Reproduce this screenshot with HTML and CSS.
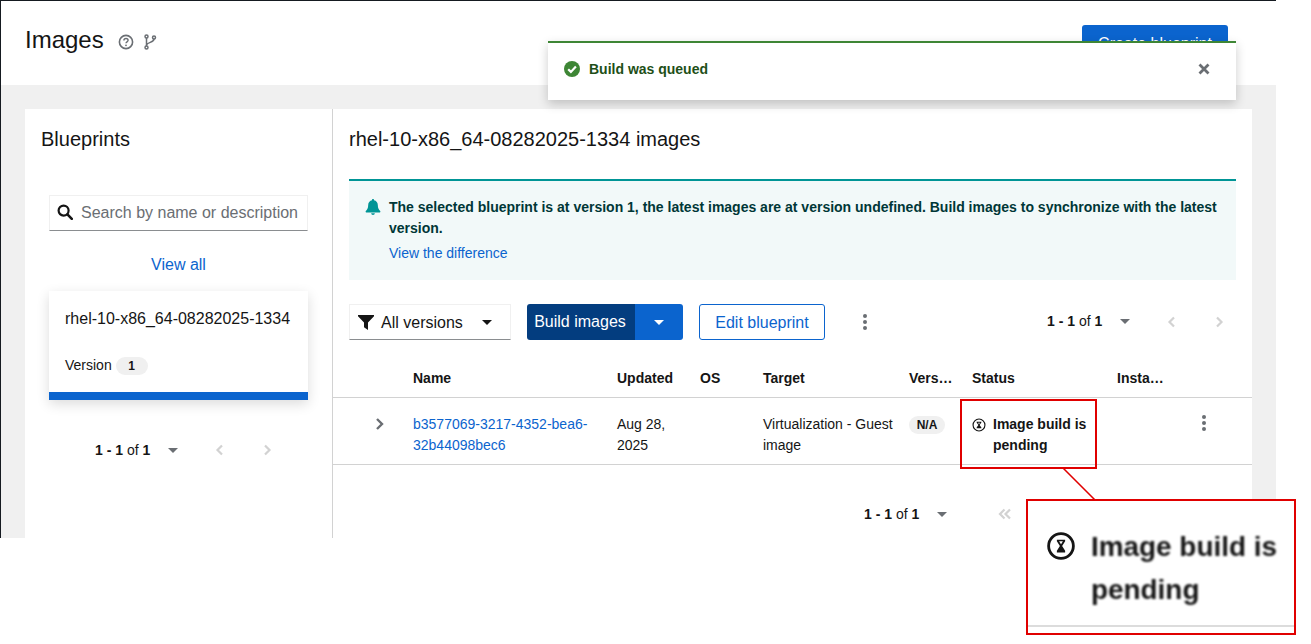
FILE: index.html
```html
<!DOCTYPE html>
<html lang="en">
<head>
  <meta charset="UTF-8" />
  <meta name="viewport" content="width=device-width, initial-scale=1.0"/>
  <title>Images</title>
  <link rel="stylesheet" href="styles.css">
</head>
<body>
  <div class="page">
    <div class="frame">
      <header class="page-head">
        <h1>Images</h1>
        <svg class="head-icon help" viewBox="0 0 16 16"><circle cx="8" cy="8" r="6.6" fill="none" stroke="#6a6e73" stroke-width="1.6"/><path d="M5.9 6.4c0-1.2 1-1.9 2.1-1.9s2.1.7 2.1 1.8c0 1.6-2.1 1.5-2.1 3" fill="none" stroke="#6a6e73" stroke-width="1.4"/><circle cx="8" cy="11.3" r=".9" fill="#6a6e73"/></svg>
        <svg class="head-icon branch" viewBox="0 0 12 16"><g fill="none" stroke="#6a6e73" stroke-width="1.5"><circle cx="2.5" cy="2.5" r="1.5"/><circle cx="2.5" cy="13.5" r="1.5"/><circle cx="10" cy="3.5" r="1.5"/><path d="M2.5 4v8M10 5c0 3.5-6.5 3-7.5 6"/></g></svg>
        <button class="btn-primary create">Create blueprint</button>
      </header>

      <div class="page-body">
        <div class="panel">
          <aside class="sidebar">
            <h2>Blueprints</h2>
            <div class="search">
              <svg class="search-icon" viewBox="0 0 16 16"><circle cx="6.6" cy="6.6" r="5" fill="none" stroke="#151515" stroke-width="2.2"/><path d="M10.4 10.4l4.4 4.4" stroke="#151515" stroke-width="2.6" stroke-linecap="round"/></svg>
              <span>Search by name or description</span>
            </div>
            <a class="view-all" href="#">View all</a>
            <div class="bp-card">
              <div class="bp-name">rhel-10-x86_64-08282025-1334</div>
              <div class="bp-version">Version <span class="badge">1</span></div>
            </div>
            <div class="pager side-pager">
              <span class="pager-count"><b>1 - 1</b> of <b>1</b></span>
              <span class="caret grey"></span>
              <svg class="pager-btn" viewBox="0 0 16 14"><path d="M10 2.500L5.500 7l4.500 4.500"/></svg>
              <svg class="pager-btn" viewBox="0 0 16 14"><path d="M6 2.500L10.500 7 6 11.500"/></svg>
            </div>
          </aside>

          <main class="main">
            <h2>rhel-10-x86_64-08282025-1334 images</h2>
            <div class="alert">
              <svg class="bell" viewBox="0 0 16 16"><path fill="#009596" d="M8 0c-.7 0-1.100.5-1 1.200C4.700 1.700 3.200 3.500 3.200 6c0 3.500-1.300 4.700-2.200 5.700-.3.300-.4.500-.4.800 0 .6.400 1 1 1h12.800c.6 0 1-.4 1-1 0-.3-.1-.5-.4-.8-.9-1-2.200-2.200-2.200-5.700 0-2.500-1.500-4.300-3.800-4.800C9.100.5 8.700 0 8 0zM6.200 14.300c0 1 .8 1.700 1.800 1.700s1.800-.7 1.800-1.700z"/></svg>
              <div>
                <p class="alert-title">The selected blueprint is at version 1, the latest images are at version undefined. Build images to synchronize with the latest version.</p>
                <a href="#">View the difference</a>
              </div>
            </div>

            <div class="toolbar">
              <div class="filter">
                <svg class="filter-icon" viewBox="0 0 16 16"><path fill="#151515" d="M0 1h16v1.200L10 8.600V16l-4-2.800V8.600L0 2.200z"/></svg>
                <span>All versions</span>
                <span class="caret dark"></span>
              </div>
              <div class="split">
                <span class="split-main">Build images</span>
                <span class="split-toggle"><span class="caret light"></span></span>
              </div>
              <button class="btn-secondary">Edit blueprint</button>
              <span class="kebab toolbar-kebab"><i></i><i></i><i></i></span>
              <div class="pager top-pager">
                <span class="pager-count"><b>1 - 1</b> of <b>1</b></span>
                <span class="caret grey"></span>
                <svg class="pager-btn" viewBox="0 0 16 14"><path d="M10 2.500L5.500 7l4.500 4.500"/></svg>
                <svg class="pager-btn" viewBox="0 0 16 14"><path d="M6 2.500L10.500 7 6 11.500"/></svg>
              </div>
            </div>

            <table class="images">
              <colgroup>
                <col class="c-expand"><col class="c-name"><col class="c-updated"><col class="c-os"><col class="c-target"><col class="c-version"><col class="c-status"><col class="c-instance"><col class="c-actions">
              </colgroup>
              <thead>
                <tr>
                  <th></th><th>Name</th><th>Updated</th><th>OS</th><th>Target</th><th>Vers…</th><th>Status</th><th>Insta…</th><th></th>
                </tr>
              </thead>
              <tbody>
                <tr>
                  <td class="expand"><svg viewBox="0 0 10 14"><path d="M2 2l5 5-5 5" fill="none" stroke="#6a6e73" stroke-width="2.400"/></svg></td>
                  <td><a href="#">b3577069-3217-4352-bea6-32b44098bec6</a></td>
                  <td>Aug 28, 2025</td>
                  <td></td>
                  <td>Virtualization - Guest image</td>
                  <td><span class="badge na">N/A</span></td>
                  <td>
                    <div class="status">
                      <svg viewBox="0 0 16 16"><circle cx="8" cy="8" r="6.800" fill="none" stroke="#151515" stroke-width="1.300"/><path fill="#151515" d="M5.300 4.200h5.400v1L8.700 8l2 2.800v1H5.300v-1l2-2.800-2-2.800z"/><path fill="#fff" d="M6.800 5.300h2.400L8 7z"/></svg>
                      <span>Image build is pending</span>
                    </div>
                  </td>
                  <td></td>
                  <td class="actions"><span class="kebab"><i></i><i></i><i></i></span></td>
                </tr>
              </tbody>
            </table>

            <div class="pager bottom-pager">
              <span class="pager-count"><b>1 - 1</b> of <b>1</b></span>
              <span class="caret grey"></span>
              <svg class="pager-btn" viewBox="0 0 16 14"><path d="M7.500 2.500L3 7l4.500 4.500M13 2.500L8.500 7l4.500 4.500"/></svg>
              <svg class="pager-btn" viewBox="0 0 16 14"><path d="M10 2.500L5.500 7l4.500 4.500"/></svg>
              <svg class="pager-btn" viewBox="0 0 16 14"><path d="M6 2.500L10.500 7 6 11.500"/></svg>
              <svg class="pager-btn" viewBox="0 0 16 14"><path d="M3 2.500L7.500 7 3 11.500M8.500 2.500L13 7l-4.500 4.500"/></svg>
            </div>
          </main>
        </div>
      </div>
    </div>

    <div class="toast">
      <svg class="toast-icon" viewBox="0 0 16 16"><circle cx="8" cy="8" r="8" fill="#3e8635"/><path d="M4.200 8.200l2.700 2.700 5-5.300" fill="none" stroke="#fff" stroke-width="2.200"/></svg>
      <span class="toast-text">Build was queued</span>
      <svg class="toast-close" viewBox="0 0 12 12"><path d="M1.500 1.500l9 9M10.500 1.500l-9 9" stroke="#6a6e73" stroke-width="2.800"/></svg>
    </div>

    <div class="mark"></div>
    <svg class="mark-line" viewBox="0 0 34 34"><path d="M1 1l32 32" stroke="#e00000" stroke-width="1.600"/></svg>
    <div class="callout">
      <svg viewBox="0 0 16 16"><circle cx="8" cy="8" r="6.600" fill="none" stroke="#151515" stroke-width="1.500"/><path fill="#151515" d="M5.800 4.600h4.400v.9L8.600 8l1.600 2.500v.9H5.800v-.9L7.400 8 5.800 5.500z"/><path fill="#fff" d="M7 5.500h2L8 7z"/></svg>
      <span>Image build is pending</span>
    </div>
  </div>
</body>
</html>
```

FILE: styles.css
```css
* { box-sizing: border-box; }
body {
  margin: 0;
  background: #fff;
  color: #151515;
  font-family: 'Liberation Sans', Arial, sans-serif;
  font-size: 14px;
  line-height: 21px;
}
a { color: #0b64ce; text-decoration: none; }
h1, h2, p { margin: 0; font-weight: 400; }

.page { position: relative; width: 1311px; height: 644px; overflow: hidden; }
.frame {
  width: 1276px;
  height: 538px;
  overflow: hidden;
  border-top: 1px solid #151a20;
  border-left: 1px solid #151a20;
}

/* header */
.page-head {
  display: flex;
  align-items: flex-start;
  height: 84px;
  padding: 24px 48px 0 24px;
  background: #fff;
}
.page-head h1 { font-size: 24px; line-height: 30px; }
.head-icon { height: 16px; margin-top: 9px; }
.help { width: 16px; margin-left: 14px; }
.branch { width: 14px; margin-left: 9px; }
.btn-primary {
  margin-left: auto;
  width: 146px;
  height: 36px;
  border: 0;
  border-radius: 3px;
  background: #0b64ce;
  color: #fff;
  font: inherit;
  font-size: 16px;
}

/* body */
.page-body { height: 453px; padding: 24px 24px 0 24px; background: #f0f0f0; }
.panel { display: flex; height: 100%; background: #fff; }

.sidebar { width: 308px; flex: none; padding: 0 24px; border-right: 1px solid #d2d2d2; }
.sidebar h2 { margin: 15px 0 0 -8px; font-size: 20px; line-height: 30px; }
.search {
  display: flex;
  align-items: center;
  gap: 8px;
  height: 36px;
  margin-top: 41px;
  padding: 0 0 2px 7px;
  border: 1px solid #f0f0f0;
  border-bottom-color: #8a8d90;
  color: #6a6e73;
  font-size: 16px;
  white-space: nowrap;
}
.search-icon { width: 16px; height: 16px; flex: none; }
.view-all { display: block; margin-top: 23px; text-align: center; font-size: 16px; }
.bp-card {
  height: 109px;
  margin-top: 16px;
  padding: 16px 16px 0;
  border-bottom: 8px solid #0b64ce;
  background: #fff;
  box-shadow: 0 4px 12px rgba(3, 3, 3, 0.14);
}
.bp-name { font-size: 16px; line-height: 24px; white-space: nowrap; }
.bp-version { display: flex; align-items: center; gap: 4px; margin-top: 24px; }

.badge {
  display: inline-block;
  min-width: 32px;
  height: 18px;
  padding: 0 8px;
  border-radius: 30px;
  background: #f0f0f0;
  font-size: 12px;
  font-weight: 700;
  line-height: 18px;
  text-align: center;
}
.badge.na { width: 36px; padding: 0; }

/* pagination */
.pager { display: flex; align-items: center; height: 36px; }
.pager-count { width: 54px; font-size: 14px; white-space: nowrap; }
.pager .caret { margin-left: 19px; }
.pager-btn {
  width: 16px;
  height: 14px;
  flex: none;
  margin-left: 31px;
  fill: none;
  stroke: #d2d2d2;
  stroke-width: 2.200;
}
.pager .caret + .pager-btn { margin-left: 34px; }
.side-pager { margin-top: 32px; padding-left: 46px; }
.top-pager { margin-left: auto; padding: 0 25px 1px 0; }
.bottom-pager { justify-content: flex-end; margin-top: 31px; padding-right: 98px; }
.bottom-pager .caret + .pager-btn { margin-left: 50px; }

.caret {
  display: inline-block;
  width: 0;
  height: 0;
  border-top: 5px solid #6a6e73;
  border-left: 5px solid transparent;
  border-right: 5px solid transparent;
}
.caret.dark { border-top-color: #151515; }
.caret.light { border-top-color: #fff; }

/* main column */
.main { flex: 1; min-width: 0; }
.main > h2 { margin: 15px 0 0 16px; font-size: 20px; line-height: 30px; white-space: nowrap; }
.alert {
  display: flex;
  gap: 8px;
  height: 101px;
  margin: 25px 16px 0;
  padding: 16px 16px 0 16px;
  border-top: 2px solid #009596;
  background: #f2f9f9;
}
.bell { width: 16px; height: 16px; flex: none; margin-top: 2px; }
.alert-title { margin-bottom: 4px; color: #003737; font-weight: 700; }

.toolbar { display: flex; align-items: center; height: 36px; margin-top: 24px; padding-left: 16px; }
.filter {
  display: flex;
  align-items: center;
  width: 162px;
  height: 36px;
  padding-left: 8px;
  border: 1px solid #f0f0f0;
  border-bottom-color: #8a8d90;
  font-size: 16px;
}
.filter-icon { width: 16px; height: 16px; margin-right: 7px; }
.filter .caret { margin-left: 19px; }
.split {
  display: flex;
  width: 156px;
  height: 36px;
  margin-left: 16px;
  border-radius: 3px;
  overflow: hidden;
  color: #fff;
  font-size: 16px;
}
.split-main { width: 108px; padding-right: 2px; background: #033d7f; line-height: 36px; text-align: center; }
.split-toggle { display: flex; flex: 1; align-items: center; justify-content: center; background: #0b64ce; }
.btn-secondary {
  width: 126px;
  height: 36px;
  margin-left: 16px;
  border: 1px solid #0b64ce;
  border-radius: 3px;
  background: #fff;
  color: #0b64ce;
  font: inherit;
  font-size: 16px;
}
.kebab { display: flex; flex-direction: column; gap: 2px; width: 4px; }
.kebab i { width: 4px; height: 4px; border-radius: 50%; background: #6a6e73; }
.toolbar-kebab { margin: -1px 0 0 38px; }

/* table */
.images { width: 100%; margin-top: 20px; border-collapse: collapse; table-layout: fixed; }
.c-expand { width: 64px; }
.c-name { width: 204px; }
.c-updated { width: 83px; }
.c-os { width: 63px; }
.c-target { width: 146px; }
.c-version { width: 63px; }
.c-status { width: 145px; }
.c-instance { width: 67px; }
.images th {
  padding: 8px 0 8px 16px;
  border-bottom: 1px solid #d2d2d2;
  font-weight: 700;
  text-align: left;
  white-space: nowrap;
}
.images td {
  height: 67px;
  padding: 16px 0 8px 16px;
  border-bottom: 1px solid #d2d2d2;
  vertical-align: top;
}
.images td:nth-child(2) { overflow-wrap: anywhere; }
.images .expand { padding: 19px 0 0 42px; }
.expand svg { display: block; width: 10px; height: 14px; }
.images .actions { padding: 17px 0 0 34px; }
.status { display: flex; gap: 7px; font-weight: 700; padding-right: 8px; }
.status svg { width: 14px; height: 14px; flex: none; margin-top: 4px; }

/* toast sits over the header */
.toast {
  position: absolute;
  top: 41px;
  left: 548px;
  display: flex;
  align-items: center;
  width: 688px;
  height: 59px;
  padding: 0 26px 5px 16px;
  border-top: 2px solid #3e8635;
  background: #fff;
  box-shadow: 0 4px 10px rgba(3, 3, 3, 0.2);
}
.toast-icon { width: 16px; height: 16px; flex: none; margin-top: -1px; }
.toast-text { margin-left: 9px; color: #1e4f18; font-weight: 700; }
.toast-close { width: 12px; height: 12px; margin-left: auto; }

/* annotation drawn over the screenshot */
.mark {
  position: absolute;
  top: 399px;
  left: 960px;
  width: 137px;
  height: 70px;
  border: 2px solid #e00000;
}
.mark-line { position: absolute; top: 467px; left: 1062px; width: 34px; height: 34px; }
.callout {
  position: absolute;
  top: 499px;
  left: 1026px;
  display: flex;
  gap: 15px;
  width: 270px;
  height: 136px;
  padding: 24px 10px 0 18px;
  border: 2px solid #e00000;
  background: #fff;
  font-size: 27.9px;
  font-weight: 700;
  line-height: 43px;
  box-shadow: inset 0 -6px 0 #fff, inset 0 -8px 0 #dcdcdc;
}
.callout svg { width: 30px; height: 30px; flex: none; margin-top: 6px; filter: blur(0.7px); }
.callout span { filter: blur(0.8px); }
```
